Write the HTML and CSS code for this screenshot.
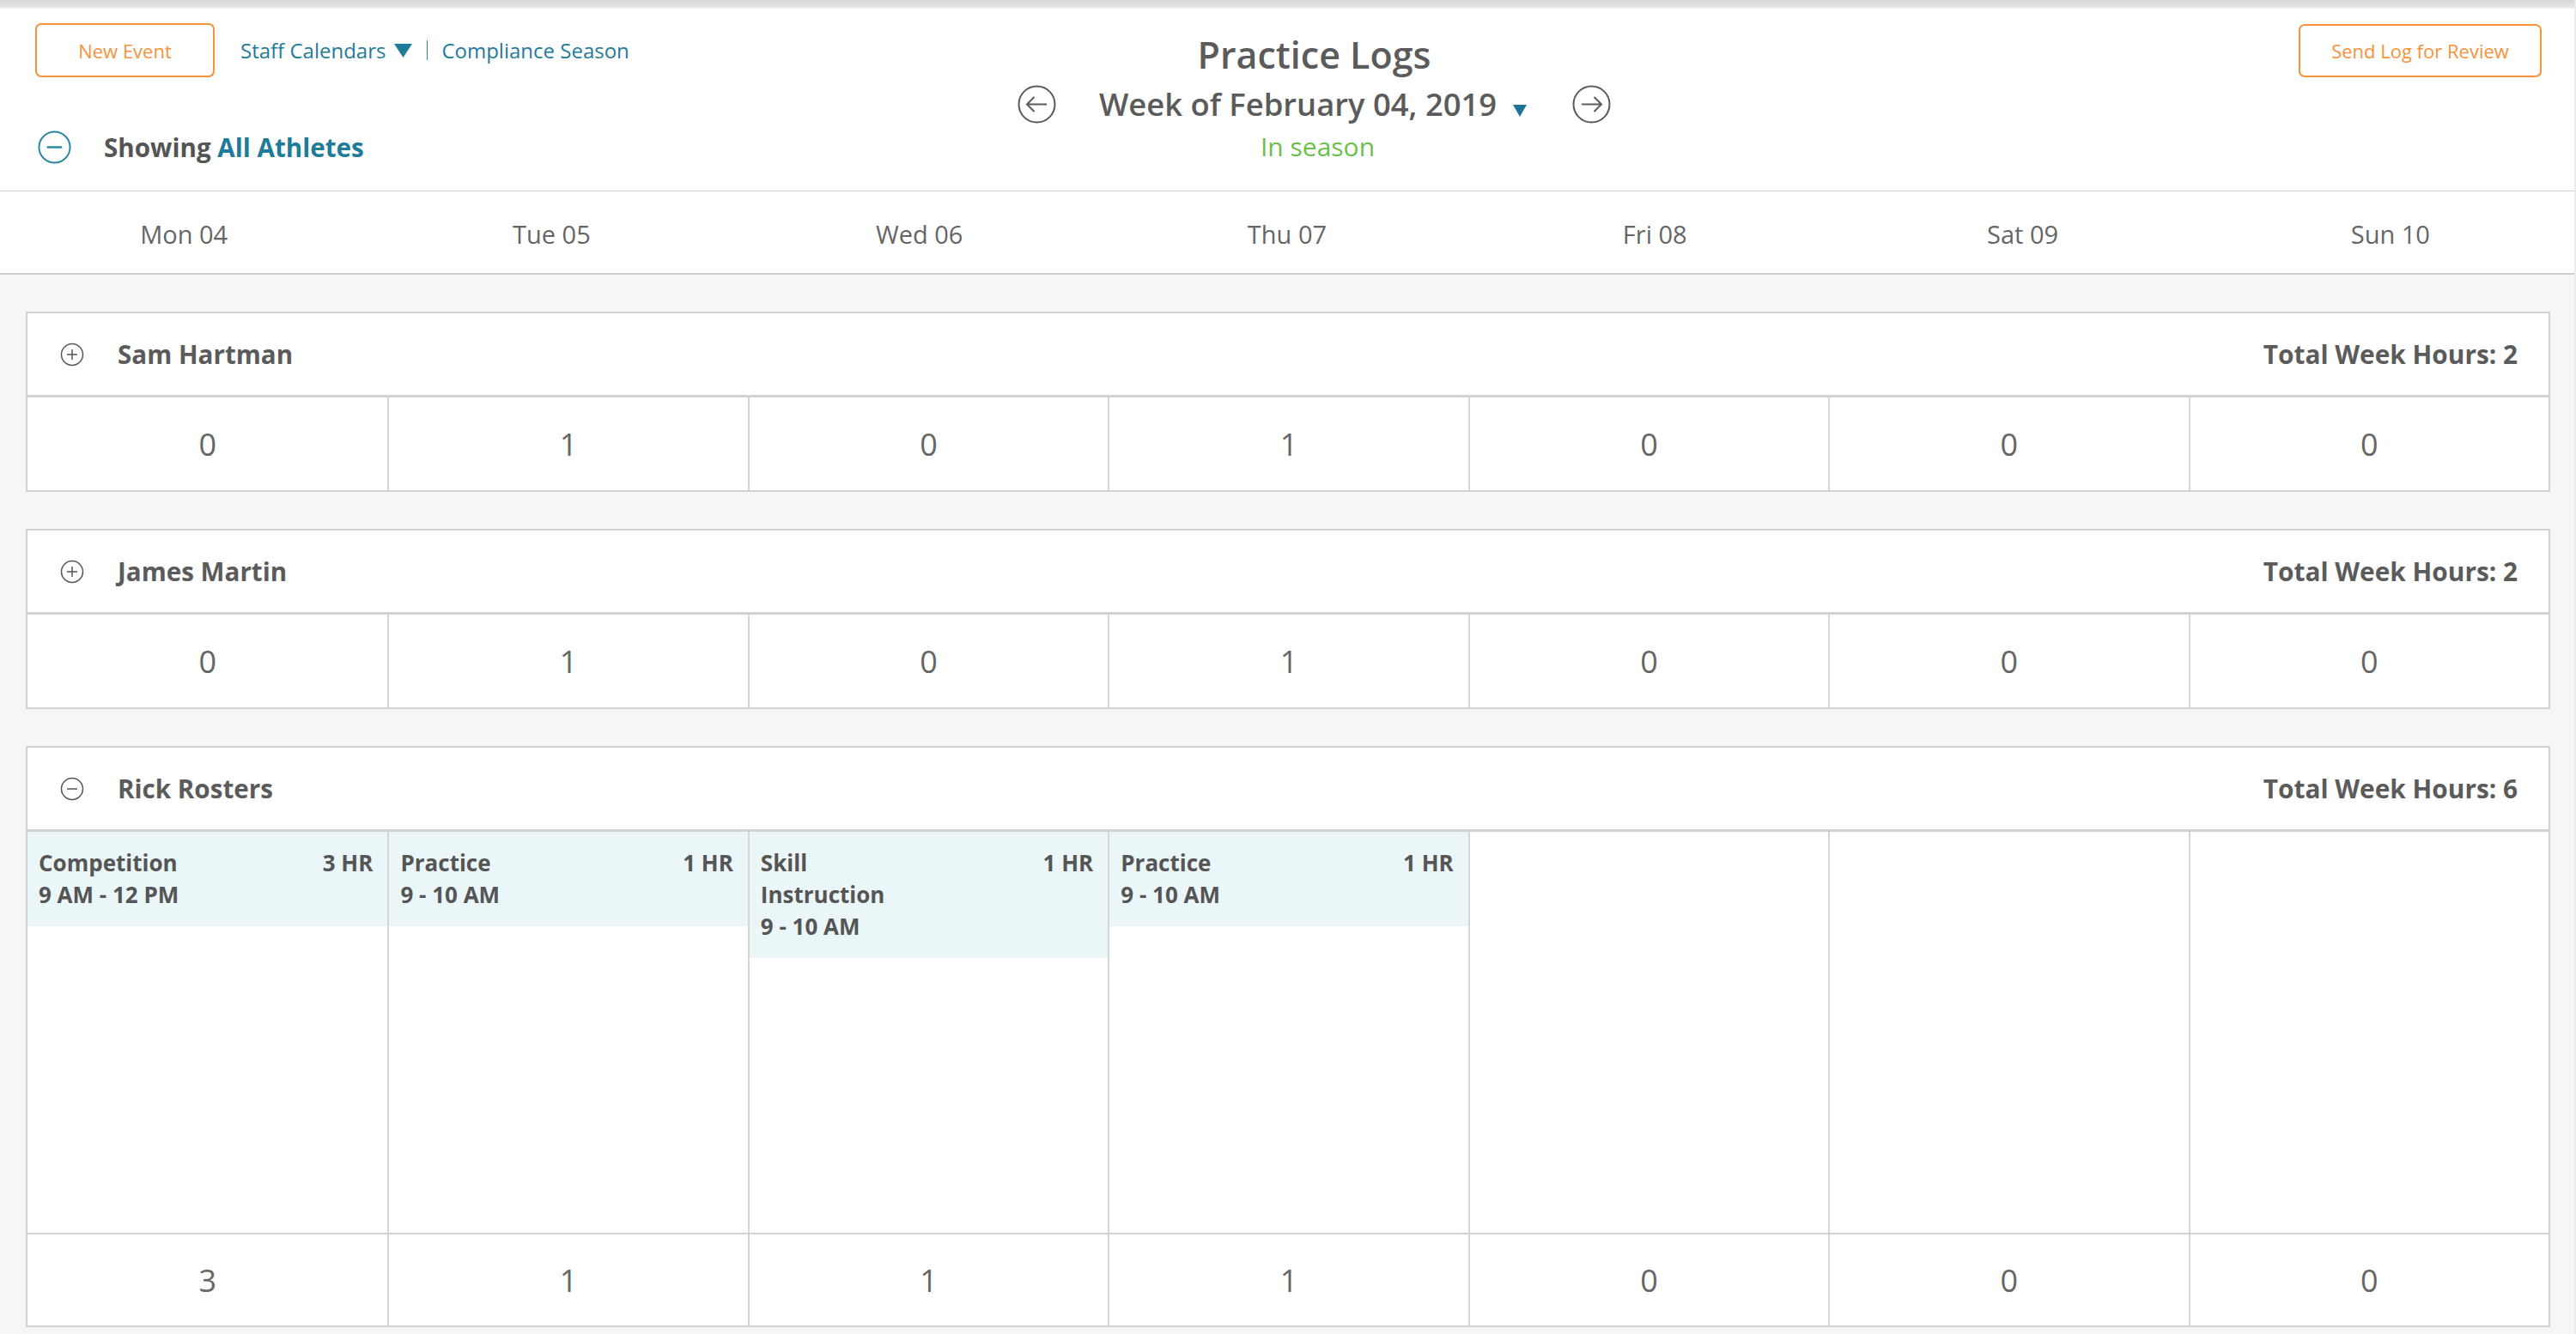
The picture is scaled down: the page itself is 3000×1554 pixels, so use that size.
FILE: index.html
```html
<!DOCTYPE html>
<html lang="en">
<head>
<meta charset="utf-8">
<title>Practice Logs</title>
<link rel="stylesheet" href="styles.css">
</head>
<body>
<div class="shadow"></div>
<div class="app">
  <header class="header">
    <div class="h-left">
      <div class="toolbar">
        <button class="btn btn-new">New Event</button>
        <nav class="links">
          <a href="#" class="link">Staff Calendars</a>
          <svg class="caret-lg" viewBox="0 0 21 16"><path d="M0 0h21L10.5 16z" fill="#1f7b9a"/></svg>
          <span class="sep"></span>
          <a href="#" class="link">Compliance Season</a>
        </nav>
      </div>
      <div class="showing">
        <svg class="showing-icon" viewBox="0 0 40 40"><circle cx="20" cy="20" r="18.5" fill="none" stroke="#2a86a0" stroke-width="2"/><path d="M11 20h18" stroke="#2a86a0" stroke-width="2.5"/></svg>
        <span class="showing-label">Showing <span class="teal">All Athletes</span></span>
      </div>
    </div>
    <div class="h-center">
      <h1 class="title">Practice Logs</h1>
      <div class="week">
        <svg class="arrow" viewBox="0 0 45 45"><circle cx="22.5" cy="22.5" r="21" fill="none" stroke="#5a5a5a" stroke-width="2"/><path d="M34 22.5H11M19.5 14l-8.5 8.5 8.5 8.5" fill="none" stroke="#5a5a5a" stroke-width="2"/></svg>
        <span class="week-label">Week of February 04, 2019</span>
        <svg class="caret-sm" viewBox="0 0 18 14"><path d="M1 0h16L9 14z" fill="#1f7393"/></svg>
        <svg class="arrow arrow-next" viewBox="0 0 45 45"><circle cx="22.5" cy="22.5" r="21" fill="none" stroke="#5a5a5a" stroke-width="2"/><path d="M11 22.5h23M25.5 14l8.5 8.5-8.5 8.5" fill="none" stroke="#5a5a5a" stroke-width="2"/></svg>
      </div>
      <div class="season">In season</div>
    </div>
    <div class="h-right">
      <button class="btn btn-send">Send Log for Review</button>
    </div>
  </header>

  <div class="days">
    <div class="day">Mon 04</div>
    <div class="day">Tue 05</div>
    <div class="day">Wed 06</div>
    <div class="day">Thu 07</div>
    <div class="day">Fri 08</div>
    <div class="day">Sat 09</div>
    <div class="day">Sun 10</div>
  </div>

  <main class="content">
    <section class="athlete">
      <div class="athlete-head">
        <svg class="toggle" viewBox="0 0 28 28"><circle cx="14" cy="14" r="12.5" fill="none" stroke="#555" stroke-width="1.5"/><path d="M14 8v12M8 14h12" stroke="#555" stroke-width="1.5"/></svg>
        <span class="name">Sam Hartman</span>
        <span class="total">Total Week Hours: 2</span>
      </div>
      <div class="grid7">
        <div class="cell num">0</div>
        <div class="cell num">1</div>
        <div class="cell num">0</div>
        <div class="cell num">1</div>
        <div class="cell num">0</div>
        <div class="cell num">0</div>
        <div class="cell num">0</div>
      </div>
    </section>

    <section class="athlete">
      <div class="athlete-head">
        <svg class="toggle" viewBox="0 0 28 28"><circle cx="14" cy="14" r="12.5" fill="none" stroke="#555" stroke-width="1.5"/><path d="M14 8v12M8 14h12" stroke="#555" stroke-width="1.5"/></svg>
        <span class="name">James Martin</span>
        <span class="total">Total Week Hours: 2</span>
      </div>
      <div class="grid7">
        <div class="cell num">0</div>
        <div class="cell num">1</div>
        <div class="cell num">0</div>
        <div class="cell num">1</div>
        <div class="cell num">0</div>
        <div class="cell num">0</div>
        <div class="cell num">0</div>
      </div>
    </section>

    <section class="athlete">
      <div class="athlete-head">
        <svg class="toggle" viewBox="0 0 28 28"><circle cx="14" cy="14" r="12.5" fill="none" stroke="#555" stroke-width="1.5"/><path d="M8 14h12" stroke="#555" stroke-width="1.5"/></svg>
        <span class="name">Rick Rosters</span>
        <span class="total">Total Week Hours: 6</span>
      </div>
      <div class="grid7 events">
        <div class="cell ecell">
          <div class="event">
            <div class="event-top"><span class="event-name">Competition</span><span class="event-hr">3 HR</span></div>
            <div class="event-time">9 AM - 12 PM</div>
          </div>
        </div>
        <div class="cell ecell">
          <div class="event">
            <div class="event-top"><span class="event-name">Practice</span><span class="event-hr">1 HR</span></div>
            <div class="event-time">9 - 10 AM</div>
          </div>
        </div>
        <div class="cell ecell">
          <div class="event">
            <div class="event-top"><span class="event-name">Skill Instruction</span><span class="event-hr">1 HR</span></div>
            <div class="event-time">9 - 10 AM</div>
          </div>
        </div>
        <div class="cell ecell">
          <div class="event">
            <div class="event-top"><span class="event-name">Practice</span><span class="event-hr">1 HR</span></div>
            <div class="event-time">9 - 10 AM</div>
          </div>
        </div>
        <div class="cell ecell"></div>
        <div class="cell ecell"></div>
        <div class="cell ecell"></div>
      </div>
      <div class="grid7 totals">
        <div class="cell num tnum">3</div>
        <div class="cell num tnum">1</div>
        <div class="cell num tnum">1</div>
        <div class="cell num tnum">1</div>
        <div class="cell num tnum">0</div>
        <div class="cell num tnum">0</div>
        <div class="cell num tnum">0</div>
      </div>
    </section>
  </main>
</div>
</body>
</html>
```

FILE: styles.css
```css
html, body {
  margin: 0;
  padding: 0;
}

body {
  background: #ececec;
  font-family: "Open Sans", "Liberation Sans", sans-serif;
  color: #5b5b5b;
}

.shadow {
  height: 10px;
  margin-right: 2px;
  background: linear-gradient(#d8d8d8, #e2e2e2 70%, #f2f2f2);
}

.app {
  margin-right: 2px;
  background: #f6f6f6;
  min-height: 1544px;
}

/* ---------- header ---------- */
.header {
  background: #fff;
  display: grid;
  grid-template-columns: 1fr auto 1fr;
  align-items: start;
  padding: 17px 38px 31px 41px;
  border-bottom: 1px solid #d0d0d0;
}

.btn {
  background: #fff;
  border: 2px solid #f7923a;
  border-radius: 7px;
  color: #f7923a;
  font-family: "Open Sans", "Liberation Sans", sans-serif;
  font-size: 22px;
  padding: 0;
  cursor: pointer;
}

.btn-new {
  width: 209px;
  height: 63px;
}

.btn-send {
  width: 283px;
  height: 62px;
  margin-top: 1px;
}

.toolbar {
  display: flex;
  align-items: center;
}

.links {
  display: flex;
  align-items: center;
  margin-left: 30px;
  font-size: 24px;
}

.link {
  color: #1f7b9a;
  text-decoration: none;
}

.caret-lg {
  width: 21px;
  height: 16px;
  margin-left: 10px;
}

.sep {
  width: 1px;
  height: 23px;
  background: #2a85a3;
  margin: 0 16px 0 17px;
}

.showing {
  display: flex;
  align-items: center;
  height: 39px;
  margin-top: 62px;
  margin-left: 3px;
}

.showing-icon {
  width: 39px;
  height: 39px;
}

.showing-label {
  margin-left: 38px;
  font-size: 29.6px;
  font-weight: 700;
  color: #555;
}

.teal {
  color: #1f7b9a;
}

.h-center {
  margin-left: 60px;
  margin-top: 12px;
  display: flex;
  flex-direction: column;
  align-items: center;
}

.title {
  margin: 0;
  font-size: 43px;
  font-weight: 600;
  line-height: 50px;
  color: #5b5b5b;
}

.week {
  display: flex;
  align-items: center;
  height: 44px;
  margin-top: 10px;
}

.arrow {
  width: 45px;
  height: 45px;
}

.week-label {
  margin-left: 50px;
  font-size: 36.4px;
  font-weight: 600;
  line-height: 44px;
  color: #5b5b5b;
}

.caret-sm {
  width: 18px;
  height: 14px;
  margin-left: 18px;
  align-self: flex-end;
  margin-bottom: 7px;
}

.arrow-next {
  margin-left: 52px;
}

.season {
  margin-top: 10px;
  font-size: 30px;
  line-height: 36px;
  color: #6abf4b;
  padding-left: 8px;
}

.h-right {
  justify-self: end;
}

/* ---------- day header ---------- */
.days {
  display: grid;
  grid-template-columns: repeat(7, 1fr);
  background: #fff;
  height: 91px;
  padding-top: 4px;
  border-bottom: 2px solid #cfcfcf;
}

.day {
  text-align: center;
  font-size: 29px;
  line-height: 91px;
  color: #666;
}

/* ---------- athletes ---------- */
.content {
  padding: 43px 28px 9px 30px;
}

.athlete {
  margin-bottom: 43px;
}

.athlete:last-child {
  margin-bottom: 0;
}

.athlete-head {
  display: flex;
  align-items: center;
  height: 95px;
  padding: 0 36px 0 38px;
  background: #fff;
  border: 2px solid #d2d2d2;
  border-bottom-width: 3px;
}

.toggle {
  width: 28px;
  height: 28px;
  flex: none;
}

.name {
  margin-left: 39px;
  font-size: 29.6px;
  font-weight: 700;
  color: #5b5b5b;
}

.total {
  margin-left: auto;
  font-size: 29.8px;
  font-weight: 700;
  color: #5b5b5b;
}

.grid7 {
  display: grid;
  grid-template-columns: repeat(7, 1fr);
  background: #fff;
  border: 2px solid #d2d2d2;
  border-top: 0;
}

.cell + .cell {
  border-left: 2px solid #d6d6d6;
}

.num {
  height: 108px;
  display: flex;
  align-items: center;
  justify-content: center;
  font-size: 36px;
  color: #666;
}

.events {
  height: 467px;
  border-bottom: 0;
}

.ecell {
  min-width: 0;
}

.event {
  background: #eaf6f8;
  padding: 18px 17px 18px 13px;
  font-size: 26px;
  font-weight: 700;
  line-height: 37px;
  color: #555;
}

.event-top {
  display: flex;
  justify-content: space-between;
  align-items: flex-start;
}

.event-name {
  width: 46%;
}

.totals {
  border-top: 2px solid #d2d2d2;
}

.tnum {
  height: 106px;
}
```
